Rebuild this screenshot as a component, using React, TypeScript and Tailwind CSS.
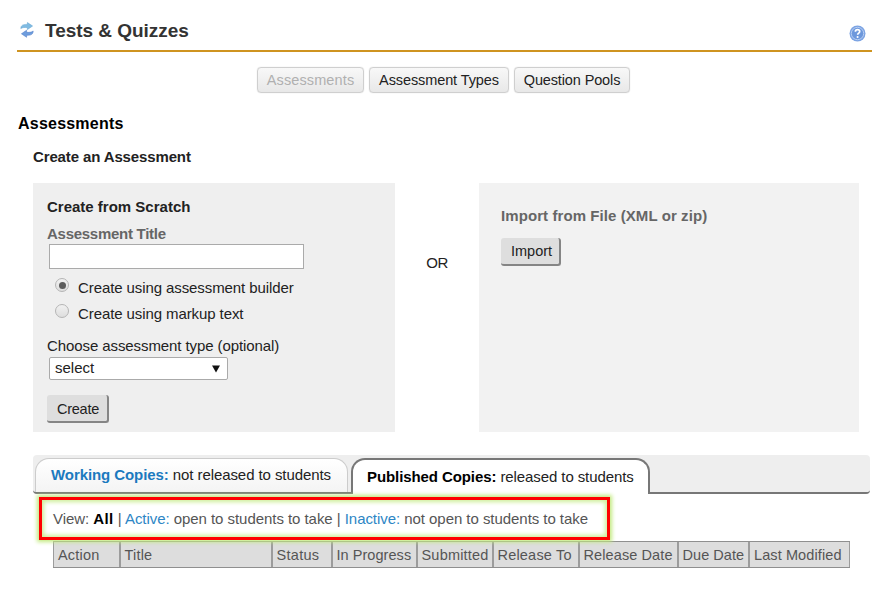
import React from "react";

const columns = [
  { label: "Action", cell: "w-[68px]", text: "tracking-[0.2px]" },
  { label: "Title", cell: "w-[152px]", text: "tracking-[0.2px]" },
  { label: "Status", cell: "w-[60px]", text: "tracking-[0.3px]" },
  { label: "In Progress", cell: "w-[85px]", text: "tracking-[0.05px]" },
  { label: "Submitted", cell: "w-[76px]", text: "tracking-[0.2px]" },
  { label: "Release To", cell: "w-[86px]", text: "tracking-[0.2px]" },
  { label: "Release Date", cell: "w-[99px]", text: "tracking-[0.1px]" },
  { label: "Due Date", cell: "w-[71px]", text: "tracking-[0.05px]" },
  { label: "Last Modified", cell: "w-[100px]", text: "tracking-[0.1px]" },
];

function RefreshIcon() {
  return (
    <svg width="14" height="16" viewBox="0 0 14 16" className="block">
      <path d="M.8 6.6C.8 3.3 3 2.2 7.4 2.4V.5L12.6 4 7.4 7.6V5.6C4.6 5.3 2.6 5.4.8 6.6Z" fill="#7fbbe2" stroke="#5b9fd0" strokeWidth=".5" />
      <path d="M13.2 9c0 3.3-2.2 4.5-6.6 4.3v2L1.4 11.8 6.6 8.2v2.1c2.8.2 4.8 0 6.6-1.3Z" fill="#6e9ddd" stroke="#4977c4" strokeWidth=".5" />
    </svg>
  );
}

function HelpIcon() {
  return (
    <svg width="17" height="17" viewBox="0 0 17 17" className="block">
      <circle cx="8.5" cy="8.5" r="8" fill="#7ba3e3" />
      <circle cx="8.5" cy="8.5" r="6.2" fill="#6d98dc" stroke="#b5cdf3" strokeWidth="1" />
      <path d="M6.4 6.7c0-2.7 4.3-2.6 4.3-.1 0 1.5-2 1.6-2 3.1" fill="none" stroke="#fff" strokeWidth="1.7" />
      <circle cx="8.6" cy="12" r="1.05" fill="#fff" />
    </svg>
  );
}

function NavButton({ className, children }: { className: string; children: React.ReactNode }) {
  return (
    <button className={`h-[26px] rounded-[4px] border border-[#cfcfcf] bg-linear-to-b from-[#f8f8f8] to-[#e8e8e8] text-[14.5px] leading-[24px] shadow-[0_0_1px_#c8c8c8] ${className}`}>
      {children}
    </button>
  );
}

function ActionButton({ className, children }: { className: string; children: React.ReactNode }) {
  return (
    <button className={`block h-7 rounded-[3px] border-r-2 border-b-2 border-r-[#858585] border-b-[#858585] bg-[#dedede] text-left text-[14.5px] text-[#222] ${className}`}>
      {children}
    </button>
  );
}

function Radio({ checked = false }: { checked?: boolean }) {
  return (
    <span className="flex size-[14px] shrink-0 items-center justify-center rounded-full border border-[#b5b5b5] bg-linear-to-b from-[#f1f1f1] to-[#dedede]">
      {checked && <span className="size-[7px] rounded-full bg-[#5c5c5c]" />}
    </span>
  );
}

export default function App() {
  return (
    <div className="h-[591px] w-[894px] overflow-hidden bg-white font-['Liberation_Sans',Arial,sans-serif] text-[15px] whitespace-nowrap text-[#222]">
      <header className="ml-[17px] flex h-[52px] w-[855px] border-b-2 border-[#cf9420] pt-5">
        <div className="ml-[3px] pt-[2px]"><RefreshIcon /></div>
        <h1 className="ml-[11px] text-[19px] leading-[22px] font-bold tracking-[-0.03px] text-[#333]">
          <span>Tests &amp; Quizzes</span>
        </h1>
        <div className="mr-[6px] ml-auto pt-[5px]"><HelpIcon /></div>
      </header>

      <nav className="ml-[257px] flex gap-[5px] pt-[15px]">
        <NavButton className="w-[107px] tracking-[0.12px] text-[#b0b0b0]"><span>Assessments</span></NavButton>
        <NavButton className="w-[140px] tracking-[-0.1px]"><span>Assessment Types</span></NavButton>
        <NavButton className="w-[116px] tracking-[-0.13px]"><span>Question Pools</span></NavButton>
      </nav>

      <h2 className="mt-[21px] ml-[18px] text-[16px] leading-5 font-bold tracking-[0.22px] text-black"><span>Assessments</span></h2>
      <h3 className="mt-[13px] ml-[33px] leading-5 font-bold tracking-[-0.13px]"><span>Create an Assessment</span></h3>

      <main className="mt-4 ml-[33px] flex h-[249px]">
        <section className="w-[362px] bg-[#efefef] pt-[13px] pl-[14px]">
          <h4 className="leading-[21px] font-bold"><span>Create from Scratch</span></h4>
          <label className="mt-[7px] block leading-5 font-bold tracking-[-0.27px] text-[#666]"><span>Assessment Title</span></label>
          <div className="ml-[2px] h-[25px] w-[255px] border border-[#aaa] bg-white" />
          <div className="mt-[9px] ml-[8px] flex h-[22px] items-start">
            <Radio checked /><span className="ml-[9px] leading-[20px] tracking-[-0.09px]">Create using assessment builder</span>
          </div>
          <div className="mt-[4px] ml-[8px] flex h-[22px] items-start">
            <Radio /><span className="ml-[9px] leading-[20px] tracking-[-0.09px]">Create using markup text</span>
          </div>
          <div className="mt-[10px] leading-5 tracking-[-0.09px]"><span>Choose assessment type (optional)</span></div>
          <div className="mt-px ml-[2px] flex h-[23px] w-[179px] items-center justify-between rounded-[2px] border border-[#aaa] bg-white pr-[7px] pl-[5px]">
            <span>select</span>
            <svg width="8" height="8" viewBox="0 0 8 8"><path d="M0 .5h8L4 7.5Z" fill="#111" /></svg>
          </div>
          <div className="mt-[15px]"><ActionButton className="w-[62px] pl-[10px] leading-[28px] tracking-[-0.25px]"><span>Create</span></ActionButton></div>
        </section>
        <div className="flex w-[84px] justify-center pt-[70px] leading-5 tracking-[-0.5px]"><span>OR</span></div>
        <section className="w-[380px] bg-[#f2f2f2] pt-[23px] pl-[22px]">
          <h4 className="leading-5 font-bold tracking-[0.08px] text-[#666]"><span>Import from File (XML or zip)</span></h4>
          <div className="mt-[12px]"><ActionButton className="w-[60px] pl-[10px] leading-[26px]"><span>Import</span></ActionButton></div>
        </section>
      </main>

      <div className="mt-[23px] ml-[33px] flex h-[39px] w-[837px] rounded-[4px] bg-[#eee]">
        <div className="flex w-[318px] rounded-bl-[4px] border-b-2 border-[#777] pl-[2px]">
          <div className="mt-[3px] w-[313px] rounded-t-[14px] border border-b-0 border-[#ccc] bg-linear-to-b from-white to-[#f4f4f4] pl-[15px] leading-[32px] tracking-[-0.08px]">
            <span><b className="text-[#1c7abf]">Working Copies:</b> not released to students</span>
          </div>
        </div>
        <div className="mt-[3px] w-[299px] rounded-t-[14px] border-2 border-b-0 border-[#777] bg-white pl-[14px] leading-[33px] tracking-[-0.09px]">
          <span><b className="text-black">Published Copies:</b> released to students</span>
        </div>
        <div className="grow rounded-br-[4px] border-b-2 border-[#777]" />
      </div>

      <div className="relative z-10 mt-[3px] ml-[39px] h-[43px] w-[571px] border-3 border-[#ff0000] pl-[11px] leading-[37px] tracking-[-0.05px] text-[#555] shadow-[0_0_4px_2px_#c3ea80,inset_0_0_4px_2px_#cdee98]">
        <span>View: <b className="tracking-[0.4px] text-black">All</b> | <span className="text-[#2d86c5]">Active:</span> open to students to take | <span className="text-[#2d86c5]">Inactive:</span> not open to students to take</span>
      </div>

      <div className="mt-px ml-[53px] flex h-[27px] w-[797px] border-y border-[#8f8f8f] bg-[#ddd] text-[14.5px] leading-[26px] text-[#555]">
        {columns.map((column, i) => (
          <div
            key={column.label}
            className={`${column.cell} shrink-0 border-[#9c9c9c] ${i === 0 ? "border-l border-r-2 pl-[4px]" : i === columns.length - 1 ? "border-r pl-[4px]" : "border-r-2 pl-[3.5px]"}`}
          >
            <span className={column.text}>{column.label}</span>
          </div>
        ))}
      </div>
    </div>
  );
}
